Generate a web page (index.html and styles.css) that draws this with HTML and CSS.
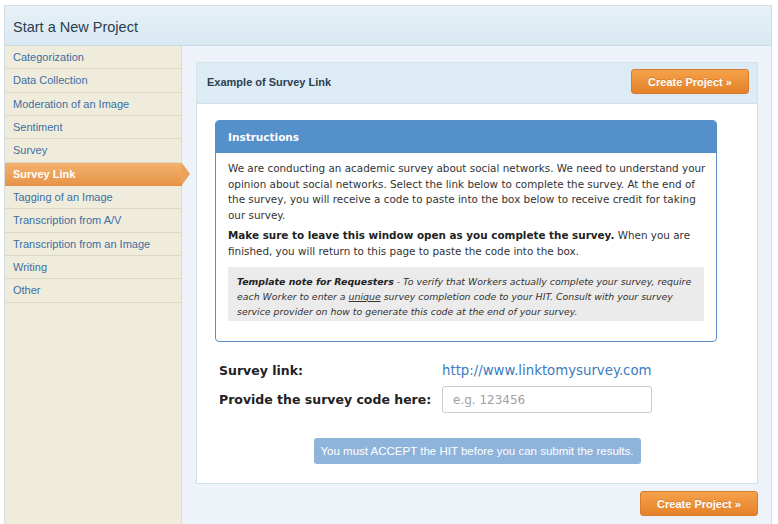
FILE: index.html
```html
<!DOCTYPE html>
<html lang="en">
<head>
<meta charset="utf-8">
<title>Start a New Project</title>
<link rel="stylesheet" href="styles.css">
</head>
<body>
<div class="page">
  <header class="topbar"><h1>Start a New Project</h1></header>
  <div class="layout">
    <nav class="sidebar">
      <a class="nav-item" href="#">Categorization</a>
      <a class="nav-item" href="#">Data Collection</a>
      <a class="nav-item" href="#">Moderation of an Image</a>
      <a class="nav-item" href="#">Sentiment</a>
      <a class="nav-item" href="#">Survey</a>
      <a class="nav-item active" href="#">Survey Link</a>
      <a class="nav-item" href="#">Tagging of an Image</a>
      <a class="nav-item" href="#">Transcription from A/V</a>
      <a class="nav-item" href="#">Transcription from an Image</a>
      <a class="nav-item" href="#">Writing</a>
      <a class="nav-item" href="#">Other</a>
    </nav>
    <main class="main">
      <section class="panel">
        <div class="panel-head">
          <h2>Example of Survey Link</h2>
          <button class="btn-orange">Create Project »</button>
        </div>
        <div class="panel-body">
          <div class="instructions">
            <div class="instr-head">Instructions</div>
            <div class="instr-body">
              <p>We are conducting an academic survey about social networks. We need to understand your opinion about social networks. Select the link below to complete the survey. At the end of the survey, you will receive a code to paste into the box below to receive credit for taking our survey.</p>
              <p><strong>Make sure to leave this window open as you complete the survey.</strong> When you are finished, you will return to this page to paste the code into the box.</p>
              <div class="note"><strong>Template note for Requesters</strong> - To verify that Workers actually complete your survey, require each Worker to enter a <u>unique</u> survey completion code to your HIT. Consult with your survey service provider on how to generate this code at the end of your survey.</div>
            </div>
          </div>
          <div class="fields">
            <div class="field-label">Survey link:</div>
            <a class="field-link" href="#">http://www.linktomysurvey.com</a>
            <label class="field-label" for="code">Provide the survey code here:</label>
            <input id="code" class="field-input" type="text" placeholder="e.g. 123456">
          </div>
          <div class="submit-row">
            <button class="btn-disabled" disabled>You must ACCEPT the HIT before you can submit the results.</button>
          </div>
        </div>
      </section>
      <div class="footer-actions">
        <button class="btn-orange">Create Project »</button>
      </div>
    </main>
  </div>
</div>
</body>
</html>
```
FILE: styles.css
```css
* { box-sizing: border-box; }
html, body { margin: 0; padding: 0; background: #fff; }
body { font-family: "Liberation Sans", Arial, sans-serif; }

.page {
  margin: 5px 6px 0 4px;
  height: 519px;
  border: 1px solid #d5dee4;
  border-bottom: none;
  display: flex;
  flex-direction: column;
  overflow: hidden;
}

.topbar {
  height: 40px;
  flex: none;
  background: linear-gradient(#e7f1f7, #d9e9f2);
  border-bottom: 1px solid #cadbe5;
  padding: 3px 0 0 8px;
}
.topbar h1 {
  margin: 0;
  font-weight: normal;
  font-size: 14.5px;
  line-height: 36px;
  color: #2b3d4e;
}

.layout { flex: 1; display: flex; min-height: 0; }

.sidebar {
  width: 177px;
  flex: none;
  background: #f0ecdc;
  border-right: 1px solid #e2ddc8;
  position: relative;
  z-index: 2;
}
.nav-item {
  display: block;
  height: 23.33px;
  line-height: 22.33px;
  padding-left: 8px;
  border-bottom: 1px solid #ddd8c3;
  font-size: 11px;
  color: #3c6ea4;
  text-decoration: none;
  white-space: nowrap;
}
.nav-item.active {
  position: relative;
  margin-right: -1px;
  background: linear-gradient(#f2b26e, #e8944a);
  border-bottom-color: #e29048;
  color: #fff;
  font-weight: bold;
}
.nav-item.active::after {
  content: "";
  position: absolute;
  right: -8px;
  top: 0;
  border-left: 8px solid #eca15c;
  border-top: 11.67px solid transparent;
  border-bottom: 11.67px solid transparent;
}

.main {
  flex: 1;
  background: #edf3f8;
  padding: 16px 13px 0 14px;
}

.panel {
  background: #fff;
  border: 1px solid #d3e1ea;
}
.panel-head {
  height: 41px;
  background: #dcebf4;
  border-bottom: 1px solid #d0e0ea;
  display: flex;
  align-items: flex-start;
  justify-content: space-between;
  padding: 6px 8px 0 10px;
}
.panel-head h2 {
  margin: 0;
  font-size: 11px;
  line-height: 26px;
  font-weight: bold;
  color: #2c4052;
}

.btn-orange {
  width: 118px;
  height: 25px;
  border: 1px solid #d77b2e;
  border-radius: 3px;
  background: linear-gradient(#f5a24a, #e5812a);
  color: #fff;
  font-family: "Liberation Sans", Arial, sans-serif;
  font-size: 11px;
  font-weight: bold;
  text-shadow: 0 -1px 0 rgba(150, 70, 10, 0.3);
  padding: 0;
  cursor: pointer;
}

.panel-body { padding: 16px 0 19px 0; }

.instructions {
  width: 502px;
  margin-left: 18px;
  border: 1px solid #5b8ec5;
  border-radius: 4px;
  overflow: hidden;
  font-family: "DejaVu Sans", Verdana, sans-serif;
  color: #333;
}
.instr-head {
  height: 32px;
  line-height: 32px;
  background: #5490c9;
  color: #fff;
  font-size: 10.5px;
  font-weight: bold;
  padding-left: 12px;
}
.instr-body { padding: 8px 6px 20px 12px; }
.instr-body p {
  margin: 0 0 5px;
  font-size: 10.4px;
  line-height: 15.5px;
}
.instr-body p + p { margin-bottom: 8px; }
.instr-body strong { color: #222; }
.note {
  margin-right: 6px;
  background: #ebebeb;
  padding: 7px 6px 2px 9px;
  font-size: 9.4px;
  line-height: 15px;
  font-style: italic;
}

.fields {
  display: grid;
  grid-template-columns: 223px 210px;
  row-gap: 8px;
  align-items: center;
  margin: 21px 0 0 22px;
  font-family: "DejaVu Sans", Verdana, sans-serif;
}
.field-label {
  font-size: 12.5px;
  font-weight: bold;
  color: #222;
}
.field-link {
  font-size: 13.3px;
  color: #3b7bbf;
  text-decoration: none;
  white-space: nowrap;
}
.field-input {
  width: 210px;
  height: 27px;
  border: 1px solid #cbcbcb;
  border-radius: 3px;
  padding: 0 10px;
  font-family: "DejaVu Sans", Verdana, sans-serif;
  font-size: 12px;
  color: #333;
}
.field-input::placeholder { color: #a0a0a0; }

.submit-row {
  display: flex;
  justify-content: center;
  margin-top: 25px;
}
.btn-disabled {
  width: 327px;
  height: 26px;
  border: none;
  border-radius: 3px;
  background: #8fb4dc;
  color: #fff;
  font-family: "Liberation Sans", Arial, sans-serif;
  font-size: 11.5px;
  padding: 0;
}

.footer-actions {
  display: flex;
  justify-content: flex-end;
  margin-top: 7px;
}
```
